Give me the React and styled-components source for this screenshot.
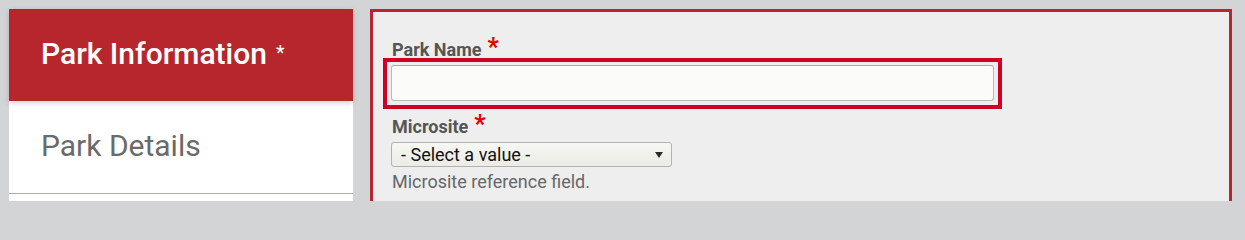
import React from 'react';
import styled, { createGlobalStyle } from 'styled-components';

const GlobalStyle = createGlobalStyle`
  html, body {
    margin: 0;
    padding: 0;
    background: #d3d4d6;
    font-family: Roboto, "Liberation Sans", Arial, sans-serif;
  }
  * { box-sizing: border-box; }
`;

const Page = styled.div`
  display: flex;
  align-items: stretch;
  gap: 17px;
  height: 201px;
  overflow: hidden;
  padding: 9px 13px 0 9px;
`;

const Sidebar = styled.nav`
  width: 344px;
  flex-shrink: 0;
  background: #fff;
`;

const Tab = styled.div`
  position: relative;
  height: ${p => (p.active ? '92px' : '93px')};
  padding: 27px 32px 0;
  font-size: 30px;
  line-height: 35px;
  font-weight: ${p => (p.active ? 500 : 400)};
  color: ${p => (p.active ? '#fff' : '#6a6a6a')};
  background: ${p => (p.active ? '#b8262d' : '#fff')};
  box-shadow: ${p => (p.active ? '0 2px 6px rgba(0, 0, 0, 0.18)' : 'none')};
  border-bottom: ${p => (p.active ? 'none' : '1px solid #acaba6')};
  z-index: ${p => (p.active ? 1 : 0)};
`;

const TabMark = styled.span`
  font-size: 20px;
  font-weight: 400;
  margin-left: 9px;
  line-height: 0;
  vertical-align: 4px;
`;

const Panel = styled.section`
  flex: 1;
  background: #eeeeee;
  border: 3px solid #b8262d;
  border-bottom: none;
  padding: 27px 18px 0;
`;

const Label = styled.label`
  display: block;
  font-size: 18px;
  line-height: 21px;
  font-weight: 700;
  color: #555;
  padding-left: 1px;
  margin-top: ${p => p.$top || 0}px;
`;

const Req = styled.span`
  color: #e60000;
  font-size: 25px;
  line-height: 0;
  margin-left: 6px;
`;

const FocusRing = styled.div`
  width: 619px;
  margin: -2px 0 0 -8px;
  padding: 3px 4px 4px 4px;
  border: 4px solid #cf0022;
`;

const TextInput = styled.input`
  display: block;
  width: 603px;
  height: 36px;
  margin: 0;
  background: #fbfbfa;
  border: 1px solid #b9b9b9;
  border-top-color: #a9a9a9;
  border-radius: 3px;
  outline: none;
  font-family: inherit;
  font-size: 18px;
  padding: 0 8px;
`;

const SelectWrap = styled.div`
  position: relative;
  width: 281px;
  margin-top: 5px;
`;

const Select = styled.select`
  appearance: none;
  display: block;
  width: 100%;
  height: 25px;
  padding: 0 24px 0 9px;
  background: linear-gradient(#f7f7f3, #ecece6);
  border: 1px solid #b2b2b0;
  border-radius: 3px;
  font-family: inherit;
  font-size: 18px;
  line-height: 23px;
  color: #111;
`;

const Arrow = styled.svg`
  position: absolute;
  right: 9px;
  top: 10px;
  pointer-events: none;
`;

const Help = styled.div`
  font-size: 18px;
  line-height: 21px;
  color: #666;
  margin-top: 4px;
  padding-left: 1px;
`;

export default function App() {
  return (
    <>
      <GlobalStyle />
      <Page>
        <Sidebar>
          <Tab active>
            Park Information<TabMark>*</TabMark>
          </Tab>
          <Tab>Park Details</Tab>
        </Sidebar>
        <Panel>
          <Label htmlFor="park-name">
            Park Name<Req>*</Req>
          </Label>
          <FocusRing>
            <TextInput id="park-name" type="text" />
          </FocusRing>
          <Label htmlFor="microsite" $top={7}>
            Microsite<Req>*</Req>
          </Label>
          <SelectWrap>
            <Select id="microsite" defaultValue="">
              <option value="">- Select a value -</option>
            </Select>
            <Arrow width="8" height="6" viewBox="0 0 8 6">
              <path d="M0 0h8L4 6z" fill="#2b2b2b" />
            </Arrow>
          </SelectWrap>
          <Help>Microsite reference field.</Help>
        </Panel>
      </Page>
    </>
  );
}
